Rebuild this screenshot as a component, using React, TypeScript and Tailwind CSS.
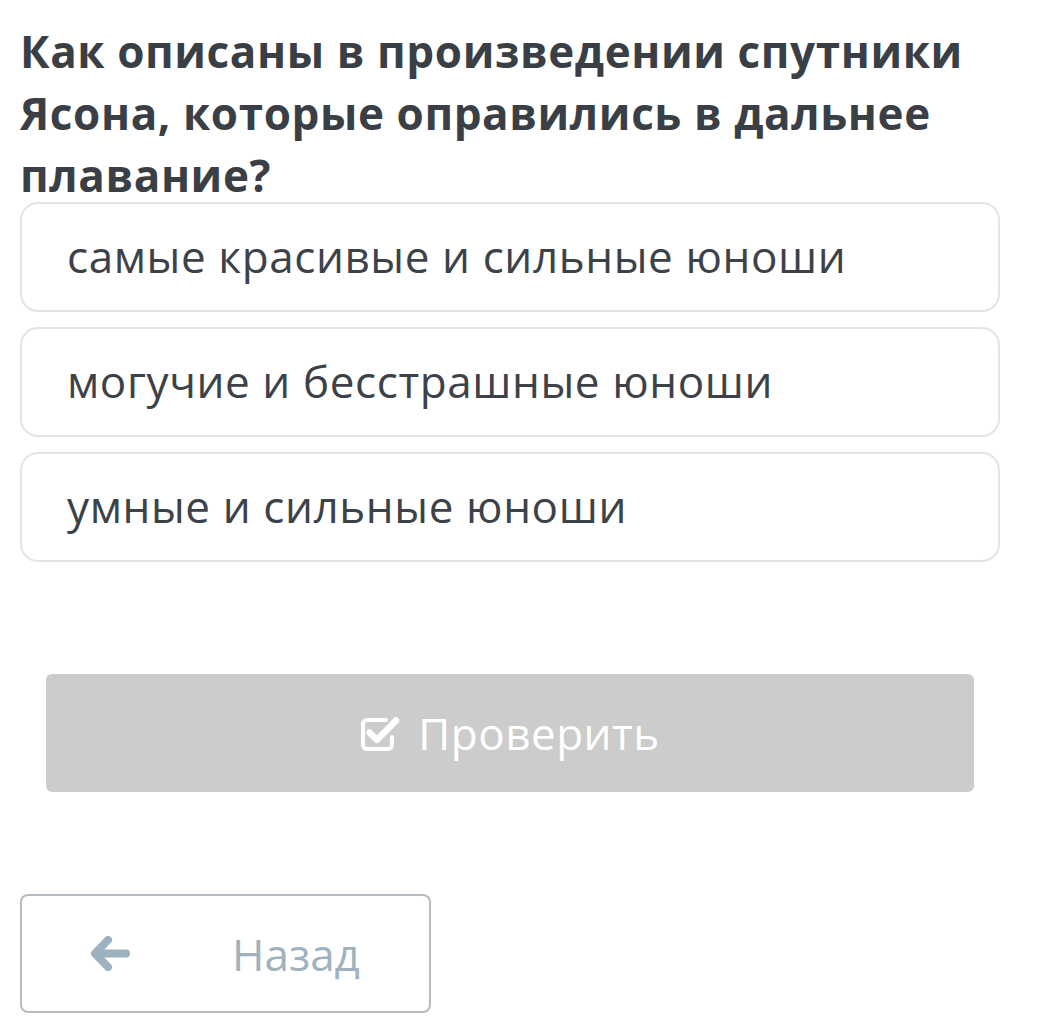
import React from "react";

function CheckSquareIcon() {
  return (
    <svg width="42" height="38" viewBox="0 0 42 38" fill="none" className="shrink-0">
      <path
        d="M26 6 H7 a4 4 0 0 0 -4 4 V31 a4 4 0 0 0 4 4 H28 a4 4 0 0 0 4 -4 V23"
        stroke="white"
        strokeWidth="4"
        strokeLinecap="round"
        strokeLinejoin="round"
      />
      <path
        d="M9.5 18.5 L17 26 L36 6.5"
        stroke="white"
        strokeWidth="6.5"
        strokeLinecap="round"
        strokeLinejoin="round"
      />
    </svg>
  );
}

function ArrowLeftIcon() {
  return (
    <svg width="40" height="35" viewBox="0 0 40 35" fill="none" className="shrink-0">
      <path
        d="M17 4 L4 17.5 L17 31"
        stroke="#9db1be"
        strokeWidth="8"
        strokeLinecap="round"
        strokeLinejoin="round"
      />
      <path d="M6 17.5 H35" stroke="#9db1be" strokeWidth="8" strokeLinecap="round" />
    </svg>
  );
}

const options = [
  "самые красивые и сильные юноши",
  "могучие и бесстрашные юноши",
  "умные и сильные юноши",
];

export default function App() {
  return (
    <div
      className="w-[1049px] h-[1018px] bg-white overflow-hidden"
      style={{ fontFamily: '"Open Sans", "Noto Sans", sans-serif' }}
    >
      <div className="pl-[20px] pr-[40px] pt-[20px]">
        <h1 className="text-[44px] leading-[62px] font-bold text-[#3a3f46] tracking-[0.6px]">
          Как описаны в произведении спутники Ясона, которые оправились в дальнее плавание?
        </h1>
        <div className="flex flex-col gap-[15px] mt-[-4px] mr-[9px]">
          {options.map((o) => (
            <div
              key={o}
              className="h-[110px] rounded-[18px] border-2 border-[#e0e6e8] flex items-center pl-[45px] pb-[2px]"
            >
              <span className="text-[44px] text-[#3d4249] tracking-[0.6px]">{o}</span>
            </div>
          ))}
        </div>
        <div className="px-[26px] mt-[112px] mr-[9px]">
          <div className="h-[118px] rounded-[6px] bg-[#cccccc] flex items-center justify-center gap-[16px]">
            <CheckSquareIcon />
            <span className="text-[44px] text-white tracking-[0.5px]">Проверить</span>
          </div>
        </div>
        <div className="mt-[102px]">
          <div className="w-[411px] h-[119px] rounded-[8px] border-2 border-[#b4bcc2] flex items-center pl-[69px]">
            <ArrowLeftIcon />
            <span className="ml-[101px] text-[44px] text-[#a0b2be]">Назад</span>
          </div>
        </div>
      </div>
    </div>
  );
}
